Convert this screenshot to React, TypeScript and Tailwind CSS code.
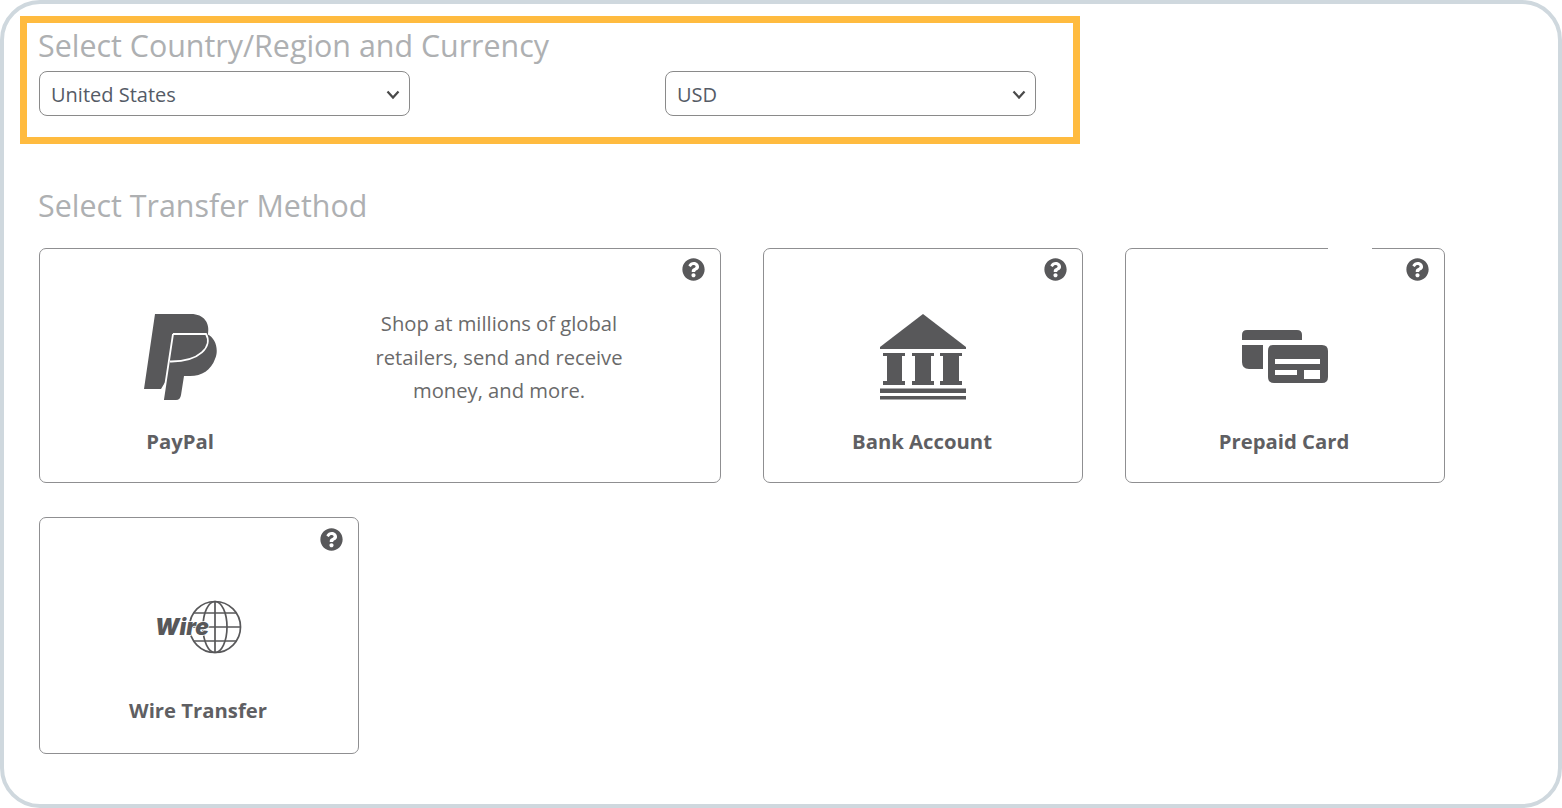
import { FaQuestionCircle } from "react-icons/fa";
import type { ReactNode } from "react";

const font = "font-['Open_Sans',sans-serif]";

function Chevron() {
  return (
    <svg className="absolute right-[10px] top-[18px] pointer-events-none" width="14" height="11" viewBox="0 0 14 11" fill="none">
      <path d="M1.5 2.5 L7 8.5 L12.5 2.5" stroke="#4a4a4a" strokeWidth="2.2" />
    </svg>
  );
}

function SelectBox({ value }: { value: string }) {
  return (
    <div className="relative w-[371px] h-[45px]">
      <select
        defaultValue={value}
        className="appearance-none w-full h-full bg-white border border-[#8a8a8a] rounded-[8px] pl-[11px] pt-[2px] text-[20px] text-[#555b66] outline-none"
      >
        <option>{value}</option>
      </select>
      <Chevron />
    </div>
  );
}

function Help({ top = "top-[9px]" }: { top?: string }) {
  return <FaQuestionCircle className={`absolute ${top} right-[15px] text-[#58585a]`} size={23} />;
}

function Label({ children }: { children: ReactNode }) {
  return <div className="text-[20.3px] leading-[24px] -translate-x-px font-bold text-[#5f5f63] text-center">{children}</div>;
}

function PayPalIcon() {
  return (
    <svg width="74" height="87" viewBox="0 0 74 87">
      <path d="M11 0 H47 C60 0 66 9 64 20 L45 60 H26 L17 75 H0 Z" fill="#58585a" />
      <path d="M29 20 H63 C72 24 75 36 71 45 C67 56 58 62 46 62 H40 L37 81 C36.500 84 35 86 32 86 H19 Z" fill="#58585a" />
      <path d="M29 20 H62 C69 32 56 48 26 47.500 M29 20 L19 86" stroke="#ffffff" strokeWidth="1.800" fill="none" />
    </svg>
  );
}

function BankIcon() {
  return (
    <svg width="86" height="86" viewBox="0 0 86 86" fill="#58585a">
      <path d="M43 0 L86 33 V35 H0 V33 Z" />
      <path d="M3 39 H25 V42 H22 V67 H25 V71 H3 V67 H7 V42 H3 Z" />
      <path d="M32 39 H54 V42 H51 V67 H54 V71 H32 V67 H35 V42 H32 Z" />
      <path d="M60 39 H82 V42 H79 V67 H82 V71 H60 V67 H63 V42 H60 Z" />
      <rect x="0" y="74.500" width="86" height="4.500" />
      <rect x="0" y="82" width="86" height="3.500" />
    </svg>
  );
}

function CardIcon() {
  return (
    <svg width="86" height="54" viewBox="0 0 86 54">
      <path d="M0 10 V5 Q0 0 5 0 H55 Q60 0 60 5 V10 Z" fill="#58585a" />
      <path d="M0 15 H21 V39 H7 Q0 39 0 32 Z" fill="#58585a" />
      <path
        fillRule="evenodd"
        d="M31 15 H80 Q86 15 86 21 V47 Q86 53 80 53 H32 Q26 53 26 47 V21 Q26 15 31 15 Z M33 29 V34 H78 V29 Z M33 40 V45 H55 V40 Z M62 40 V49 H78 V40 Z"
        fill="#58585a"
      />
    </svg>
  );
}

function WireIcon() {
  return (
    <svg width="90" height="56" viewBox="0 0 90 56">
      <g fill="none" stroke="#58585a" strokeWidth="1.700">
        <circle cx="61" cy="27" r="25.500" />
        <ellipse cx="61" cy="27" rx="12" ry="25.500" />
        <path d="M61 1.500 V52.500 M35.500 27 H86.500 M40 13 H82 M40 41 H82" />
      </g>
      <text
        x="1"
        y="35"
        fill="#58585a"
        stroke="#ffffff"
        strokeWidth="1.500"
        textLength="54"
        lengthAdjust="spacingAndGlyphs"
        className="font-['Inter',sans-serif] italic font-black text-[23px]"
        style={{ paintOrder: "stroke" }}
      >
        Wire
      </text>
    </svg>
  );
}

function Card({ title, icon, height, helpTop, iconPad = "pt-[36px]" }: { title: string; icon: ReactNode; height: string; helpTop?: string; iconPad?: string }) {
  return (
    <div className={`relative w-[320px] ${height} bg-white border border-[#8f8f91] rounded-[7px]`}>
      <Help top={helpTop} />
      <div className="flex flex-col items-center h-full">
        <div className={`h-[180px] w-full flex items-center justify-center ${iconPad}`}>{icon}</div>
        <Label>{title}</Label>
      </div>
    </div>
  );
}

export default function App() {
  return (
    <div className={`${font} w-[1562px] h-[808px] bg-white border-4 border-[#cfd8de] rounded-[40px] overflow-hidden`}>
      <div className="ml-[16px] mt-[12px] w-[1060px] h-[128px] border-[7px] border-[#ffbb3f] pl-[12px] pr-[37px]">
        <h2 className="text-[30.4px] leading-[46px] -translate-x-px text-[#aeb0b2] font-normal">Select Country/Region and Currency</h2>
        <div className="flex justify-between mt-[2px]">
          <SelectBox value="United States" />
          <SelectBox value="USD" />
        </div>
      </div>

      <h2 className="ml-[35px] mt-[40px] text-[30.4px] leading-[44px] -translate-x-px text-[#aeb0b2] font-normal">Select Transfer Method</h2>

      <div className="ml-[35px] mt-[20px] flex flex-wrap w-[1450px] gap-x-[42px] gap-y-[34px]">
        <div className="relative w-[682px] h-[235px] bg-white border border-[#8f8f91] rounded-[7px] flex">
          <Help />
          <div className="w-[282px] flex flex-col items-center">
            <div className="h-[180px] w-full flex items-center justify-center pt-[36px]">
              <PayPalIcon />
            </div>
            <Label>PayPal</Label>
          </div>
          <p className="w-[354px] pt-[58px] text-center text-[20.2px] leading-[33.500px] text-[#6a6a6a]">
            Shop at millions of global
            <br />
            retailers, send and receive
            <br />
            money, and more.
          </p>
        </div>
        <Card title="Bank Account" icon={<BankIcon />} height="h-[235px]" />
        <div className="relative">
          <Card title="Prepaid Card" icon={<CardIcon />} height="h-[235px]" />
          <div className="absolute left-[203px] -top-px w-[44px] h-[4px] bg-white" />
        </div>
        <Card title="Wire Transfer" icon={<WireIcon />} height="h-[237px]" helpTop="top-[10px]" iconPad="pt-[40px]" />
      </div>
    </div>
  );
}
